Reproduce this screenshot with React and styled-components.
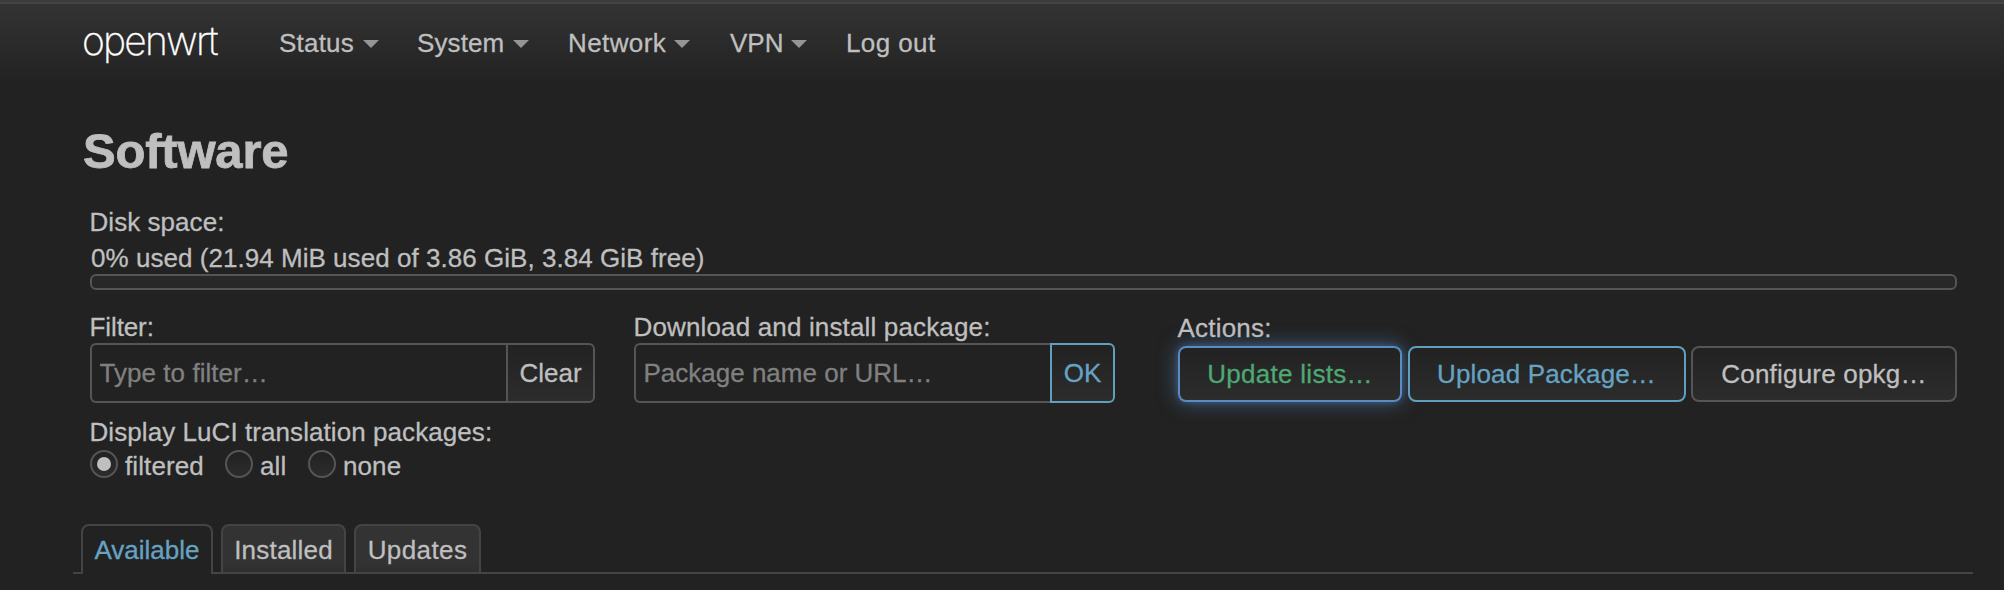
import React from "react";
import styled, { createGlobalStyle, css } from "styled-components";

const GlobalStyle = createGlobalStyle`
  *, *::before, *::after { box-sizing: border-box; }
  body {
    margin: 0;
    background: #222;
    color: #bfbfbf;
    font: 26px/36px "Liberation Sans", Arial, sans-serif;
    -webkit-text-stroke: 0.3px;
    overflow: hidden;
  }
`;

const Page = styled.div`
  height: 590px;
  background: #222;
`;

const Header = styled.header`
  height: 87px;
  padding-left: 82px;
  display: flex;
  align-items: flex-start;
  border-top: 2px solid #3c3c3c;
  background: linear-gradient(#444 0 2px, #333 2px, #222 82px);
`;

const Brand = styled.a`
  width: 197px;
  padding-top: 15px;
  color: #fff;
  font: 200 39px/48px Inter, Roboto, Lato, sans-serif;
  letter-spacing: -1.8px;
`;

const Nav = styled.nav`
  display: flex;
  padding-top: 23px;
`;

const NavItem = styled.a`
  width: ${(p) => p.$width}px;
  display: flex;
  align-items: flex-start;
  white-space: nowrap;
  letter-spacing: ${(p) => p.$track || 0}px;
`;

const NavLabel = styled.span`
  width: ${(p) => p.$width}px;
`;

const Caret = styled.i`
  margin-top: 15px;
  border: 8px solid transparent;
  border-top-color: #959595;
  border-bottom: 0;
`;

const Main = styled.main`
  padding: 35px 31px 0 73px;
`;

const Title = styled.h2`
  margin: 0 0 0 10px;
  font-size: 49px;
  line-height: 58px;
  letter-spacing: -0.2px;
  -webkit-text-stroke: 0.8px;
`;

const Controls = styled.section`
  margin: 24px 16px 0 17px;
`;

const Label = styled.label`
  display: block;
  margin-left: -0.5px;
  white-space: nowrap;
  letter-spacing: ${(p) => p.$track || 0}px;
`;

const DiskUsage = styled.div`
  padding-left: 1px;
  letter-spacing: 0.04px;
`;

const DiskBar = styled.div`
  height: 16px;
  margin-top: -2px;
  border: 2px solid #555;
  border-radius: 6px;
  background: #282828;
`;

const Columns = styled.div`
  display: flex;
  margin-top: 19px;
`;

const Field = styled.div`
  width: ${(p) => p.$width}px;
  margin-right: ${(p) => p.$gap || 0}px;
  padding-top: ${(p) => p.$drop || 0}px;
`;

const Group = styled.div`
  display: flex;
  height: 60px;
  margin-top: -2px;
`;

const Input = styled.input`
  flex: 1;
  min-width: 0;
  padding: 0 0 0 7.5px;
  border: 2px solid #555;
  border-right: 0;
  border-radius: 6px 0 0 6px;
  background: #222;
  font: inherit;
  letter-spacing: ${(p) => p.$track || 0}px;
  outline: 0;
  &::placeholder { color: #808080; opacity: 1; }
`;

const tones = {
  neutral: css`color: #bfbfbf; border-color: #555;`,
  action: css`color: #66a3c2; border-color: #609fbe;`,
  positive: css`
    color: #4ea873;
    border-color: #5b8bc4;
    box-shadow: 0 0 6px #52a8ec40, 0 0 20px #5b8bc499;
  `,
};

const Button = styled.button`
  width: ${(p) => p.$width}px;
  height: 56px;
  padding: 0 0 1px;
  border: 2px solid;
  border-radius: 8px;
  background: linear-gradient(#222, #2c2c2c);
  font: inherit;
  letter-spacing: ${(p) => p.$track || 0}px;
  white-space: nowrap;
  ${(p) => tones[p.$tone || "neutral"]}
`;

const AddonButton = styled(Button)`
  height: 60px;
  border-radius: 0 6px 6px 0;
  padding-bottom: 0;
`;

const Actions = styled.div`
  display: flex;
  justify-content: space-between;
`;

const RadioRow = styled.div`
  display: flex;
  margin-top: -2px;
`;

const RadioLabel = styled.label`
  display: flex;
  align-items: flex-start;
  width: ${(p) => p.$width}px;
  gap: 7px;
  letter-spacing: 0.1px;
`;

const Radio = styled.span`
  flex: none;
  width: 28px;
  height: 28px;
  margin-top: 2px;
  display: grid;
  place-items: center;
  border: 2px solid #555;
  border-radius: 50%;
  background: linear-gradient(#222, #2c2c2c);
  &::after {
    content: "";
    width: 14px;
    height: 14px;
    border-radius: 50%;
    background: ${(p) => (p.$checked ? "#bfbfbf" : "transparent")};
  }
`;

const Tabs = styled.div`
  display: flex;
  align-items: flex-end;
  gap: 8px;
  height: 50px;
  margin-top: 40px;
  padding-left: 8px;
  background: linear-gradient(#444, #444) 0 100% / 100% 2px no-repeat;
`;

const Tab = styled.a`
  width: ${(p) => p.$width}px;
  height: 50px;
  padding-top: 6px;
  text-align: center;
  border: 2px solid #444;
  border-bottom: 0;
  border-radius: 8px 8px 0 0;
  letter-spacing: ${(p) => p.$track || 0}px;
  color: ${(p) => (p.$active ? "#66a3c2" : "#bfbfbf")};
  background: ${(p) =>
    p.$active ? "#222" : "linear-gradient(#444, #444) 0 100% / 100% 2px no-repeat, linear-gradient(#333 75%, #2e2e2e)"};
`;

const menu = [
  { name: "Status", width: 138, label: 83.5, track: 0.2 },
  { name: "System", width: 151, label: 95.5, track: 0.1 },
  { name: "Network", width: 162, label: 106, track: 0.4 },
  { name: "VPN", width: 116, label: 60.5 },
  { name: "Log out", width: 100, track: 0.4 },
];

export default function App() {
  return (
    <Page>
      <GlobalStyle />
      <Header>
        <Brand>openwrt</Brand>
        <Nav>
          {menu.map((m) => (
            <NavItem key={m.name} $width={m.width} $track={m.track}>
              <NavLabel $width={m.label}>{m.name}</NavLabel>
              {m.label && <Caret />}
            </NavItem>
          ))}
        </Nav>
      </Header>
      <Main>
        <Title>Software</Title>
        <Controls>
          <Label $track={0.05}>Disk space:</Label>
          <DiskUsage>0% used (21.94 MiB used of 3.86 GiB, 3.84 GiB free)</DiskUsage>
          <DiskBar />
          <Columns>
            <Field $width={505} $gap={39}>
              <Label $track={-0.1}>Filter:</Label>
              <Group>
                <Input placeholder="Type to filter…" $track={0.05} />
                <AddonButton $width={89}>Clear</AddonButton>
              </Group>
            </Field>
            <Field $width={481} $gap={63}>
              <Label $track={0.15}>Download and install package:</Label>
              <Group>
                <Input placeholder="Package name or URL…" $track={0} />
                <AddonButton $width={65} $tone="action">OK</AddonButton>
              </Group>
            </Field>
            <Field $width={779} $drop={1}>
              <Label $track={0.2}>Actions:</Label>
              <Actions>
                <Button $width={224} $tone="positive" $track={0.3}>Update lists…</Button>
                <Button $width={278} $tone="action" $track={0.15}>Upload Package…</Button>
                <Button $width={266} $track={0.2}>Configure opkg…</Button>
              </Actions>
            </Field>
          </Columns>
          <Field $drop={11}>
            <Label $track={0.07}>Display LuCI translation packages:</Label>
            <RadioRow>
              <RadioLabel $width={135}><Radio $checked />filtered</RadioLabel>
              <RadioLabel $width={83}><Radio />all</RadioLabel>
              <RadioLabel $width={100}><Radio />none</RadioLabel>
            </RadioRow>
          </Field>
        </Controls>
        <Tabs>
          <Tab $width={132} $active>Available</Tab>
          <Tab $width={125} $track={0.2}>Installed</Tab>
          <Tab $width={127} $track={0.4}>Updates</Tab>
        </Tabs>
      </Main>
    </Page>
  );
}
